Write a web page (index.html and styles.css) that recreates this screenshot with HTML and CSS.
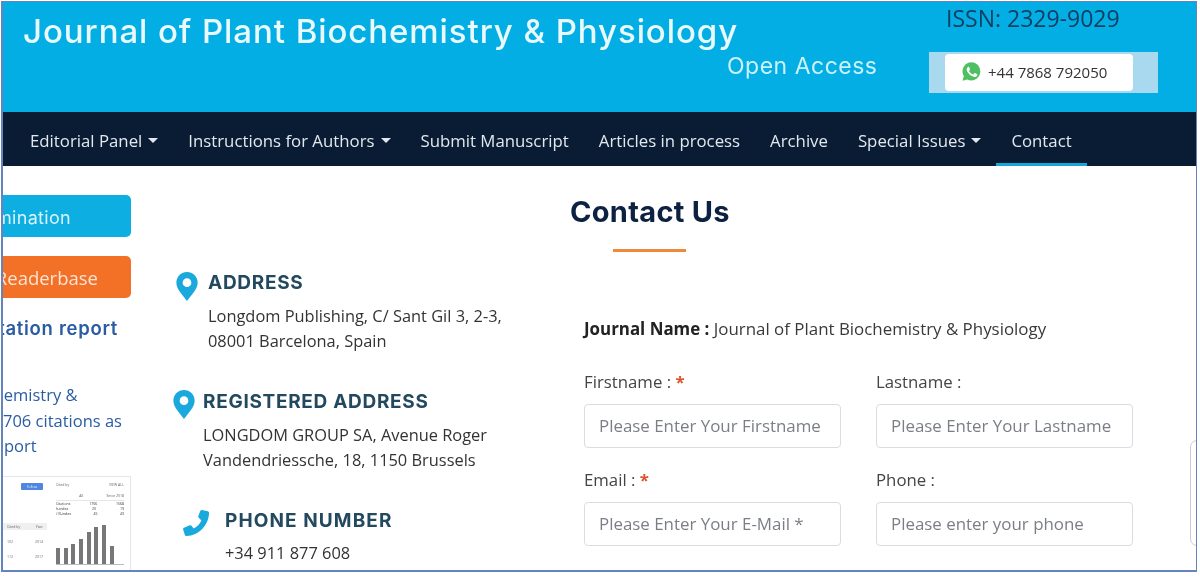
FILE: index.html
```html
<!DOCTYPE html>
<html lang="en">
<head>
<meta charset="utf-8">
<title>Contact Us</title>
<link rel="stylesheet" href="styles.css">
</head>
<body>
<div class="frame">
  <header class="banner">
    <div class="banner-left">
      <h1 class="journal">Journal of Plant Biochemistry &amp; Physiology</h1>
      <div class="open-access">Open Access</div>
    </div>
    <div class="banner-right">
      <div class="issn">ISSN: 2329-9029</div>
      <div class="wa-strip">
        <div class="wa-card">
          <svg class="wa-icon" viewBox="0 0 24 24"><path fill="#4fbf63" d="M12 1.5a10.3 10.3 0 0 0-8.8 15.6L1.8 22.5l5.5-1.4A10.3 10.3 0 1 0 12 1.5z"/><path fill="#fff" d="M8.6 6.6c-.3 0-.7.1-1 .5-.4.5-1.100 1.300-1.100 2.700s1.100 2.900 1.200 3.100c.2.200 2.100 3.400 5.200 4.600 2.500 1 3.100.8 3.600.7.600-.1 1.800-.7 2-1.500.3-.7.3-1.300.2-1.500-.1-.1-.3-.2-.6-.4l-2.200-1c-.3-.1-.5-.2-.7.100l-1 1.200c-.2.200-.4.300-.7.100-.3-.1-1.300-.5-2.500-1.500-.9-.8-1.500-1.800-1.700-2.100-.2-.3 0-.5.100-.6l.5-.6c.2-.2.200-.3.300-.5.100-.2.100-.4 0-.5L9.400 7.100c-.2-.5-.5-.5-.8-.5z"/></svg>
          <span>+44 7868 792050</span>
        </div>
      </div>
    </div>
  </header>

  <nav class="nav">
    <a class="nav-item">Editorial Panel<i class="caret"></i></a>
    <a class="nav-item">Instructions for Authors<i class="caret"></i></a>
    <a class="nav-item">Submit Manuscript</a>
    <a class="nav-item">Articles in process</a>
    <a class="nav-item">Archive</a>
    <a class="nav-item">Special Issues<i class="caret"></i></a>
    <a class="nav-item active">Contact</a>
  </nav>

  <main class="content">
    <aside class="sidebar">
      <div class="side-btn blue"><span>Nomination</span></div>
      <div class="side-btn orange"><span>Readerbase</span></div>
      <div class="side-link"><span>Citation report</span></div>
      <p class="side-text"><span>Biochemistry &amp;</span><span>706 citations as</span><span>port</span></p>
      <div class="thumb">
        <div class="thumb-left">
          <div class="thumb-btn">Follow</div>
          <div class="thumb-row head"><span>Cited by</span><span>Year</span></div>
          <div class="thumb-row"><span>102</span><span>2014</span></div>
          <div class="thumb-row"><span>112</span><span>2017</span></div>
          <div class="thumb-row"><span>98</span><span>2016</span></div>
        </div>
        <div class="thumb-right">
          <div class="thumb-top"><span>Cited by</span><span>VIEW ALL</span></div>
          <div class="thumb-top sub"><span></span><span>All</span><span>Since 2018</span></div>
          <div class="thumb-top stat"><span>Citations</span><span>1706</span><span>1568</span></div>
          <div class="thumb-top stat"><span>h-index</span><span>20</span><span>19</span></div>
          <div class="thumb-top stat"><span>i10-index</span><span>45</span><span>43</span></div>
          <div class="bars">
            <i class="bar" style="height:16px"></i>
            <i class="bar" style="height:16px"></i>
            <i class="bar" style="height:20px"></i>
            <i class="bar" style="height:25px"></i>
            <i class="bar" style="height:32px"></i>
            <i class="bar" style="height:37px"></i>
            <i class="bar" style="height:39px"></i>
            <i class="bar" style="height:18px"></i>
          </div>
        </div>
      </div>
    </aside>

    <section class="contacts">
      <div class="contact c1">
        <svg class="pin" viewBox="0 0 22 30"><path fill="#1aa9dc" fill-rule="evenodd" d="M11 0a11 11 0 0 0-11 11c0 7 7 13 11 19 4-6 11-12 11-19A11 11 0 0 0 11 0zm0 6.500a4.500 4.500 0 1 1 0 9 4.500 4.500 0 0 1 0-9z"/></svg>
        <div>
          <h3 class="contact-title">ADDRESS</h3>
          <p class="contact-text">Longdom Publishing, C/ Sant Gil 3, 2-3,<br>08001 Barcelona, Spain</p>
        </div>
      </div>
      <div class="contact c2">
        <svg class="pin" viewBox="0 0 22 30"><path fill="#1aa9dc" fill-rule="evenodd" d="M11 0a11 11 0 0 0-11 11c0 7 7 13 11 19 4-6 11-12 11-19A11 11 0 0 0 11 0zm0 6.500a4.500 4.500 0 1 1 0 9 4.500 4.500 0 0 1 0-9z"/></svg>
        <div>
          <h3 class="contact-title">REGISTERED ADDRESS</h3>
          <p class="contact-text">LONGDOM GROUP SA, Avenue Roger<br>Vandendriessche, 18, 1150 Brussels</p>
        </div>
      </div>
      <div class="contact c3">
        <svg class="phone" viewBox="0 0 30 30"><path fill="#1aa9dc" d="M21.500 1l6 1.300c1 .2 1.500 1 1.500 2C28.500 17.500 18 28.500 5 29c-1 0-1.800-.5-2-1.500L1.200 22c-.2-.9.200-1.600 1-2l6-2.500c.8-.3 1.500-.1 2 .5l2.300 2.800c3.700-1.900 6.500-4.800 8.300-8.600L18 9.500c-.6-.5-.8-1.200-.5-2l2.200-5.500c.3-.7 1-1.100 1.800-1z"/></svg>
        <div>
          <h3 class="contact-title">PHONE NUMBER</h3>
          <p class="contact-text">+34 911 877 608</p>
        </div>
      </div>
    </section>

    <section class="form-col">
      <h2 class="page-title">Contact Us</h2>
      <div class="title-rule"></div>
      <form class="form">
        <p class="journal-name"><b>Journal Name :</b> Journal of Plant Biochemistry &amp; Physiology</p>
        <div class="form-grid">
          <label class="field"><span class="lbl">Firstname : <em>*</em></span><input class="input" placeholder="Please Enter Your Firstname"></label>
          <label class="field"><span class="lbl">Lastname :</span><input class="input" placeholder="Please Enter Your Lastname"></label>
          <label class="field"><span class="lbl">Email : <em>*</em></span><input class="input" placeholder="Please Enter Your E-Mail *"></label>
          <label class="field"><span class="lbl">Phone :</span><input class="input" placeholder="Please enter your phone"></label>
        </div>
      </form>
      <div class="edge-tab"></div>
    </section>
  </main>
</div>
</body>
</html>
```

FILE: styles.css
```css
* { box-sizing: border-box; }
html, body { margin: 0; padding: 0; background: #fff; }
body { height: 577px; overflow: hidden; font-family: "Open Sans", "Liberation Sans", sans-serif; }

.frame {
  width: 1196px;
  height: 571px;
  margin: 1px 0 0 1px;
  border: 2px solid #6384bd;
  border-width: 1px 1px 2px 2px;
  overflow: hidden;
  filter: blur(0.45px);
  background: #fff;
}

/* banner */
.banner {
  height: 110px;
  background: #02aee4;
  display: flex;
  justify-content: space-between;
}
.banner-left { padding: 10px 0 0 20px; width: 880px; }
.journal {
  margin: 0;
  font: 500 33px/38px "Inter", "Open Sans", sans-serif;
  color: #e9f9fd;
  letter-spacing: 0.92px;
  white-space: nowrap;
}
.open-access {
  margin: 1px 0 0 704px;
  font: 400 23px/30px "Inter", "Open Sans", sans-serif;
  color: #cdf1fb;
  letter-spacing: 0.5px;
  white-space: nowrap;
}
.banner-right { width: 268px; padding-top: 1px; margin-right: -1px; }
.issn {
  font: 400 23px/30px "Open Sans", sans-serif;
  color: #0f3f62;
  padding-left: 17px;
  white-space: nowrap;
}
.wa-strip {
  margin-top: 19px;
  width: 229px;
  height: 41px;
  padding: 2px 25px 2px 16px;
  background: #a9d9ef;
}
.wa-card {
  height: 37px;
  background: #fff;
  border-radius: 4px;
  display: flex;
  align-items: center;
  gap: 6px;
  padding: 0 0 2px 16px;
  font-size: 15px;
  color: #333;
}
.wa-icon { width: 21px; height: 21px; flex: none; }

/* nav */
.nav {
  height: 54px;
  background: #0a1c33;
  display: flex;
  padding-left: 12px;
  color: #e3e8ee;
}
.nav-item {
  display: flex;
  align-items: center;
  padding: 5px 15px 0;
  font-size: 16.800px;
  white-space: nowrap;
  border-bottom: 3px solid transparent;
}
.nav-item.active { border-bottom-color: #18a6d8; }
.caret {
  width: 0;
  height: 0;
  margin-left: 6px;
  border: 5px solid transparent;
  border-top: 5px solid #e3e8ee;
  border-bottom: 0;
}

/* content */
.content {
  display: grid;
  grid-template-columns: 128px 1fr 612px;
  height: 404px;
  overflow: hidden;
}

/* sidebar */
.sidebar { padding-top: 29px; min-width: 0; overflow: hidden; }
.side-btn {
  height: 42px;
  border-radius: 0 5px 5px 0;
  display: flex;
  align-items: center;
  justify-content: flex-end;
  font-size: 18px;
  color: #d9f3fb;
  overflow: hidden;
  white-space: nowrap;
  margin-bottom: 19px;
}
.side-btn.blue { background: #0daee2; padding: 2px 60px 0 0; font-family: "Inter", sans-serif; }
.side-btn.blue span { letter-spacing: 0.3px; }
.side-btn.orange { background: #f37027; padding: 1px 33px 0 0; font-size: 18.500px; color: #fde3d3; }
.side-link {
  display: flex;
  justify-content: flex-end;
  white-space: nowrap;
  font: 600 18.500px/24px "Inter", sans-serif;
  letter-spacing: 0.7px;
  color: #2a5ca3;
  padding-right: 13px;
  margin-top: -1px;
}
.side-text {
  margin: 42px 0 0;
  font-size: 16.500px;
  line-height: 25.500px;
  color: #2a5ca3;
}
.side-text span { display: block; white-space: nowrap; }
.side-text span:nth-child(1) { margin-left: -42px; }
.side-text span:nth-child(2) { margin-left: 0; }
.side-text span:nth-child(3) { margin-left: 1px; }

.thumb {
  margin-top: 17px;
  height: 100px;
  width: 128px;
  border: 1px solid #e4e7ea;
  border-left: 0;
  display: flex;
  font-size: 3.500px;
  color: #666;
  overflow: hidden;
}
.thumb-left { width: 44px; padding-top: 6px; flex: none; }
.thumb-btn {
  margin-left: 18px;
  width: 22px;
  height: 7px;
  background: #4f86e0;
  color: #dfeafc;
  text-align: center;
  line-height: 7px;
  border-radius: 1px;
}
.thumb-row { display: flex; justify-content: space-between; padding: 0 4px; margin-top: 8px; height: 7px; align-items: center; }
.thumb-row.head { margin-top: 33px; background: #f0f0f0; }
.thumb-right { flex: 1; padding: 5px 6px 0 9px; }
.thumb-top { display: flex; justify-content: space-between; height: 5px; align-items: center; }
.thumb-top.sub { margin-top: 4px; height: 10px; border-bottom: 1px solid #e6e6e6; }
.thumb-top.stat { height: 5px; color: #333; }
.bars {
  height: 46px;
  margin-top: 3px;
  display: flex;
  align-items: flex-end;
  gap: 3.700px;
  border-bottom: 1px solid #bbb;
}
.bar { width: 4px; background: #777; display: block; }

/* contacts */
.contacts { padding: 0; min-width: 0; }
.contact { display: flex; }
.contact-title {
  margin: 0;
  padding-top: 1px;
  font: 700 19px/24px "Inter", sans-serif;
  letter-spacing: 0.7px;
  color: #23495f;
  white-space: nowrap;
}
.contact-text {
  margin: 9px 0 0;
  font-size: 16.400px;
  line-height: 24.500px;
  color: #333;
  white-space: nowrap;
}
.pin { width: 22px; height: 29px; flex: none; }
.c1 { padding: 104px 0 0 45px; gap: 10px; }
.c1 .pin { margin-top: 2px; }
.c2 { padding: 36px 0 0 42px; gap: 8px; }
.c2 .pin { margin-top: 1px; }
.c3 { padding: 36px 0 0 51px; gap: 15px; }
.c3 .contact-title { letter-spacing: 1.100px; }
.phone { width: 28px; height: 28px; flex: none; margin-top: 1px; }
.c3 .contact-text { margin-top: 8px; }

/* form */
.form-col { position: relative; min-width: 0; }
.page-title {
  margin: 28px 0 0 -14px;
  font: 700 29px/36px "Inter", sans-serif;
  letter-spacing: 0.3px;
  color: #0d2240;
  white-space: nowrap;
}
.title-rule {
  width: 73px;
  height: 2.500px;
  background: #ee8a3c;
  margin: 19px 0 0 29px;
}
.journal-name {
  margin: 66px 0 0;
  font-size: 16.900px;
  line-height: 22px;
  color: #3a3a3a;
  white-space: nowrap;
}
.journal-name b { font-weight: 700; color: #222; }
.form-grid {
  margin-top: 31px;
  display: grid;
  grid-template-columns: 257px 257px;
  column-gap: 35px;
  row-gap: 21px;
}
.field { display: block; }
.lbl { display: block; font-size: 16.800px; line-height: 22px; color: #444; }
.lbl em { font-style: normal; color: #d9532c; font-weight: 700; }
.input {
  display: block;
  width: 257px;
  height: 44px;
  margin-top: 11px;
  padding: 0 14px;
  border: 1px solid #d8dde3;
  border-radius: 4px;
  background: #fff;
  font: 400 16.900px "Open Sans", sans-serif;
  outline: none;
}
.input::placeholder { color: #7b7f85; opacity: 1; }
.edge-tab {
  position: absolute;
  right: -8px;
  top: 274px;
  width: 14px;
  height: 106px;
  border: 1px solid #c9ced4;
  border-radius: 8px;
  background: #fff;
}
```
